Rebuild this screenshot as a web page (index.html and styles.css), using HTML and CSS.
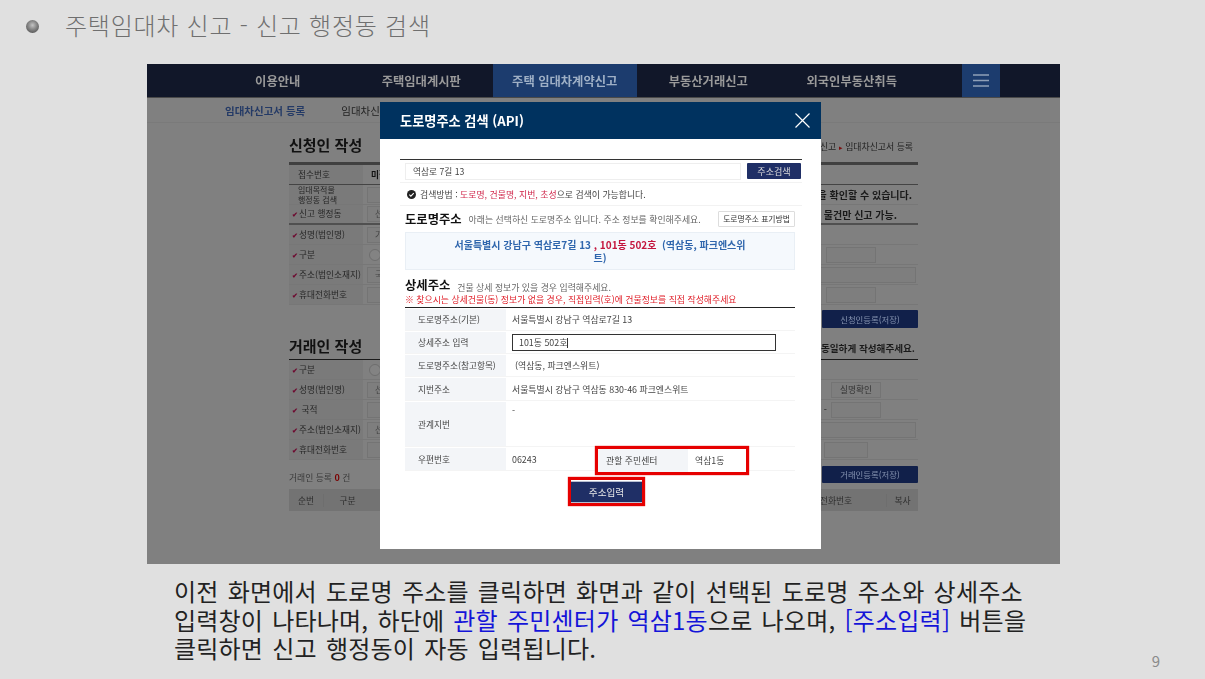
FILE: index.html
```html
<!DOCTYPE html>
<html lang="ko">
<head>
<meta charset="utf-8">
<title>주택임대차 신고 - 신고 행정동 검색</title>
<link rel="stylesheet" href="styles.css">
</head>
<body>
<div class="slide">
  <header class="slide-head">
    <span class="bullet"></span>
    <h1 class="slide-title">주택임대차 신고 - 신고 행정동 검색</h1>
  </header>

  <section class="shot">
    <nav class="gnb">
      <a class="gnb-item">이용안내</a>
      <a class="gnb-item">주택임대계시판</a>
      <a class="gnb-item active">주택 임대차계약신고</a>
      <a class="gnb-item">부동산거래신고</a>
      <a class="gnb-item">외국인부동산취득</a>
      <a class="gnb-menu"><svg width="16" height="13" viewBox="0 0 16 13"><path d="M0 1h16M0 6.5h16M0 12h16" stroke="#8fa0b8" stroke-width="1.5" fill="none"/></svg></a>
    </nav>
    <div class="subnav"><b>임대차신고서 등록</b><span>임대차신고서 조회</span></div>

    <div class="form">
      <div class="form-head">
        <h2>신청인 작성</h2>
        <span class="crumb">주택임대차 신고 <i>▸</i> 임대차신고서 등록</span>
      </div>
      <div class="rows thick">
        <div class="row line"><span class="lb plain">접수번호</span><span class="val">미접수</span></div>
        <div class="row"><span class="lb plain two">임대목적물<br>행정동 검색</span><span class="fld w100"></span><span class="note">을 확인할 수 있습니다.</span></div>
        <div class="row line2"><span class="lb req">신고 행정동</span><span class="fld w100">선택</span><span class="note n2">물건만 신고 가능.</span></div>
        <div class="row"><span class="lb req">성명(법인명)</span><span class="fld w100">가</span></div>
        <div class="row"><span class="lb req">구분</span><span class="radio"></span><span class="fld w50 ra"></span></div>
        <div class="row"><span class="lb req">주소(법인소재지)</span><span class="fld w100">국</span><span class="fld w90 ra2"></span></div>
        <div class="row"><span class="lb req">휴대전화번호</span><span class="fld w100"></span><span class="fld w50 ra"></span></div>
      </div>
      <div class="action"><span class="btn-dark">신청인등록(저장)</span></div>

      <div class="form-head second">
        <h2>거래인 작성</h2>
        <span class="crumb strong">동일하게 작성해주세요.</span>
      </div>
      <div class="rows thin">
        <div class="row"><span class="lb req">구분</span><span class="radio"></span></div>
        <div class="row"><span class="lb req">성명(법인명)</span><span class="fld w100">선</span><span class="fld w50 rb center">실명확인</span></div>
        <div class="row"><span class="lb req">&nbsp;국적</span><span class="fld w100"></span><span class="dash">-</span><span class="fld w50 rc"></span></div>
        <div class="row"><span class="lb req">주소(법인소재지)</span><span class="fld w100">선</span><span class="fld w90 ra2"></span></div>
        <div class="row"><span class="lb req">휴대전화번호</span><span class="fld w100"></span><span class="fld w44 rd"></span></div>
      </div>
      <div class="count-row">
        <span class="count">거래인 등록 <b>0</b> 건</span>
        <span class="btn-dark small">거래인등록(저장)</span>
      </div>
      <div class="thead">
        <span class="c1">순번</span><span class="c2">구분</span>
        <span class="c3">전화번호</span><span class="c4">복사</span>
      </div>
    </div>

    <div class="modal">
      <div class="modal-head">
        <strong>도로명주소 검색 (API)</strong>
        <svg width="15" height="15" viewBox="0 0 15 15"><path d="M.5.5l14 14M14.5.5l-14 14" stroke="#fff" stroke-width="1.2" fill="none"/></svg>
      </div>
      <div class="modal-body">
        <div class="search">
          <span class="search-input">역삼로 7길 13</span>
          <span class="search-btn">주소검색</span>
        </div>
        <div class="method">
          <svg width="9" height="9" viewBox="0 0 10 10"><circle cx="5" cy="5" r="5" fill="#222"/><path d="M2.6 5.1l1.7 1.7 3.2-3.3" stroke="#fff" stroke-width="1.2" fill="none"/></svg>
          <p>검색방법 : <em>도로명, 건물명, 지번, 초성</em>으로 검색이 가능합니다.</p>
        </div>
        <div class="inner">
          <div class="sec-head">
            <h3>도로명주소</h3><span class="hint">아래는 선택하신 도로명주소 입니다. 주소 정보를 확인해주세요.</span>
            <span class="rule-btn">도로명주소 표기방법</span>
          </div>
          <div class="picked">서울특별시 강남구 역삼로7길 13 <em>, 101동 502호</em> &nbsp;(역삼동, 파크엔스위<br>트)</div>
          <div class="sec-head detail">
            <h3>상세주소</h3><span class="hint">건물 상세 정보가 있을 경우 입력해주세요.</span>
          </div>
          <p class="warn">※ 찾으시는 상세건물(동) 정보가 없을 경우, 직접입력(호)에 건물정보를 직접 작성해주세요</p>
          <div class="tbl">
            <div class="tr"><span class="th">도로명주소(기본)</span><span class="td">서울특별시 강남구 역삼로7길 13</span></div>
            <div class="tr"><span class="th">상세주소 입력</span><span class="td"><span class="detail-input">101동 502호<i class="caret"></i></span></span></div>
            <div class="tr"><span class="th">도로명주소(참고항목)</span><span class="td ref">(역삼동, 파크엔스위트)</span></div>
            <div class="tr tall24"><span class="th">지번주소</span><span class="td">서울특별시 강남구 역삼동 830-46 파크엔스위트</span></div>
            <div class="tr tall"><span class="th">관계지번</span><span class="td top">-</span></div>
            <div class="tr tall24"><span class="th">우편번호</span><span class="td zip">06243</span>
              <span class="redbox"><span class="rb-label">관할 주민센터</span><span class="rb-val">역삼1동</span></span>
            </div>
          </div>
          <div class="submit"><span class="submit-frame"><span class="submit-btn">주소입력</span></span></div>
        </div>
      </div>
    </div>
  </section>

  <footer class="caption">
    <p class="caption-text">이전 화면에서 도로명 주소를 클릭하면 화면과 같이 선택된 도로명 주소와 상세주소<br>입력창이 나타나며, 하단에 <span class="blue">관할 주민센터가 역삼1동</span>으로 나오며, <span class="blue">[주소입력]</span> 버튼을<br>클릭하면 신고 행정동이 자동 입력됩니다.</p>
    <span class="page-no">9</span>
  </footer>
</div>
</body>
</html>
```

FILE: styles.css
```css
* { box-sizing: border-box; }
html, body { margin: 0; padding: 0; }
body {
  width: 1205px; height: 679px; overflow: hidden;
  background: #e0e0e0;
  font-family: "Noto Sans CJK KR", "Noto Sans", sans-serif;
  color: #222;
}
p, h1, h2, h3 { margin: 0; font-weight: inherit; }
em, i { font-style: normal; }

.slide { width: 1205px; height: 679px; display: flex; flex-direction: column; }

/* slide header */
.slide-head { height: 64px; display: flex; align-items: flex-start; padding: 7px 0 0 26px; }
.bullet {
  width: 13px; height: 13px; margin-top: 13px; border-radius: 50%;
  background: radial-gradient(circle at 50% 40%, #c4c4c4 0, #8a8a8a 40%, #3f3f3f 100%);
}
.slide-title {
  margin-left: 26px; font-size: 24px; line-height: 36px; font-weight: 300;
  color: #6f6f6f; letter-spacing: .75px; white-space: nowrap;
}

/* dimmed screenshot */
.shot {
  position: relative; width: 913px; height: 500px; margin-left: 147px;
  background: #808080; overflow: hidden; filter: blur(.3px);
}
.gnb { height: 34px; background: #111729; display: flex; padding-left: 59px; border-bottom: 1px solid #4a4a4a; }
.gnb-item {
  width: 143.5px; display: flex; align-items: center; justify-content: center;
  font-size: 12.3px; font-weight: 700; color: #9a9a9a; white-space: nowrap;
}
.gnb-item.active { background: #1c3c6e; color: #9fb0c6; }
.gnb-menu { width: 38px; margin-left: 38px; background: #1c3c6e; display: flex; align-items: center; justify-content: center; }

.subnav {
  height: 25px; border-bottom: 1px solid #7a7a7a; padding: 1px 0 0 78px;
  display: flex; align-items: center; gap: 36px; font-size: 10.5px; color: #1f1f1f; white-space: nowrap;
}
.subnav b { color: #243a66; font-weight: 700; }

/* background form */
.form { width: 629px; margin-left: 142px; }
.form-head { height: 40px; display: flex; align-items: flex-end; justify-content: space-between; padding-bottom: 8px; }
.form-head h2 { font-size: 15px; line-height: 20px; font-weight: 700; color: #111; }
.crumb { font-size: 8.9px; line-height: 16px; color: #222; padding-right: 5px; white-space: nowrap; }
.crumb i { color: #7a1010; font-size: 7px; }
.crumb.strong { font-size: 9.6px; font-weight: 700; color: #1a1a1a; padding-right: 3px; }
.form-head.second { height: 31px; padding-bottom: 3px; border-bottom: 1px solid #1a1a1a; }
.rows.thick { border-top: 3px solid #404040; margin-top: -1px; }
.row { height: 20px; display: flex; align-items: center; border-bottom: 1px solid #777; }
.row.line { border-bottom: 1px solid #444; }
.row.line2 { border-bottom: 2px solid #505050; }
.lb {
  width: 74px; height: 100%; flex: none; background: #7a7a7a; display: flex; align-items: center;
  font-size: 8.7px; line-height: 10px; color: #262626; padding-left: 3px; white-space: nowrap;
}
.lb.plain { padding-left: 9px; }
.lb.two { font-size: 8px; line-height: 10px; }
.lb.req::before { content: "✔"; color: #6e0a30; font-size: 7px; font-weight: 700; margin-right: 1px; }
.val { margin-left: 8px; font-size: 8.7px; font-weight: 700; color: #111; }
.fld {
  height: 16px; flex: none; margin-left: 4px; border: 1px solid #747474; background: #7e7e7e;
  font-size: 8.7px; line-height: 14px; color: #444; padding-left: 7px; white-space: nowrap;
}
.w100 { width: 60px; }
.w50 { width: 50px; }
.w44 { width: 44px; }
.w90 { width: 100px; }
.center { padding: 0; text-align: center; color: #333; }
.ra { margin-left: auto; margin-right: 42px; }
.ra2 { margin-left: auto; margin-right: 2px; }
.rb, .rc { margin-left: auto; margin-right: 37px; }
.rd { margin-left: auto; margin-right: 50px; }
.dash { margin-left: auto; margin-right: 4px; font-size: 9px; color: #222; }
.dash + .rc { margin-left: 0; }
.radio { width: 12px; height: 12px; margin-left: 6px; border: 1px solid #6e6e6e; border-radius: 50%; background: #838383; }
.note { margin-left: auto; padding-right: 6px; font-size: 10px; font-weight: 700; color: #1a1a1a; white-space: nowrap; }
.note.n2 { padding-right: 21px; }
.action { height: 24px; display: flex; justify-content: flex-end; align-items: flex-start; padding-top: 5px; }
.btn-dark {
  width: 96px; height: 18px; background: #11204a; color: #8593b0; border-radius: 1px;
  font-size: 8.4px; line-height: 18px; text-align: center; white-space: nowrap;
}
.btn-dark.small { height: 17px; line-height: 17px; margin-top: 6px; }
.count-row { height: 29px; display: flex; justify-content: space-between; align-items: flex-start; }
.count { font-size: 8.8px; line-height: 14px; color: #3a3a3a; margin-top: 11px; white-space: nowrap; }
.count b { color: #7a0000; font-size: 9px; }
.thead { height: 22px; background: #737373; display: flex; align-items: center; font-size: 8.8px; color: #2e2e2e; }
.thead span { text-align: center; }
.c1 { width: 34px; }
.c2 { width: 48px; border-left: 1px solid #6e6e6e; }
.c3 { width: 80px; margin-left: auto; padding-right: 20px; }
.c4 { width: 32px; border-left: 1px solid #6e6e6e; }

/* modal */
.modal {
  position: absolute; left: 233px; top: 38px; width: 441px; height: 447px;
  background: #fff; display: flex; flex-direction: column;
}
.modal-head {
  height: 37px; flex: none; background: #00325f; color: #fff;
  display: flex; align-items: center; justify-content: space-between; padding: 0 11px 0 20px;
}
.modal-head strong { font-size: 13.2px; font-weight: 700; white-space: nowrap; }
.modal-body { padding: 20px 19px 0 20px; }
.search {
  border-top: 1px solid #333; height: 24px; padding: 3px 1px 0 5px;
  display: flex; justify-content: space-between; align-items: flex-start; border-bottom: 1px solid #f2f2f2;
}
.search-input {
  width: 336px; height: 17px; border: 1px solid #eee; padding-left: 7px;
  font-size: 8.7px; line-height: 15px; color: #444; white-space: nowrap;
}
.search-btn {
  width: 54px; height: 16px; background: #1f2f66; color: #ddd; border-radius: 1px;
  font-size: 9.1px; line-height: 16px; text-align: center;
}
.method {
  height: 23px; padding-left: 7px; display: flex; align-items: center; gap: 4px;
  font-size: 8.9px; color: #444; border-bottom: 1px solid #f2f2f2; white-space: nowrap;
}
.method em { color: #d0284c; }
.inner { padding: 0 7px 0 5px; }
.sec-head { height: 26px; display: flex; align-items: center; white-space: nowrap; }
.sec-head h3 { font-size: 12.3px; font-weight: 700; color: #111; }
.hint { margin-left: 7px; font-size: 8.9px; color: #666; }
.rule-btn {
  margin-left: auto; width: 77px; height: 16px; border: 1px solid #ddd; border-radius: 1px;
  font-size: 7.8px; line-height: 14px; text-align: center; color: #333;
}
.picked {
  height: 38px; background: #f5f9fd; border: 1px solid #e9eff5; text-align: center; padding-top: 5px;
  font-size: 10px; line-height: 13px; font-weight: 700; color: #2f66ad; white-space: nowrap;
}
.picked em { color: #c4163e; }
.sec-head.detail { height: 22px; margin-top: 2px; align-items: flex-end; }
.warn { font-size: 8.9px; line-height: 12px; color: #e0202a; white-space: nowrap; }
.tbl { border-top: 1px solid #222; margin-top: 1px; font-size: 8.9px; color: #444; }
.tr { height: 23px; display: flex; align-items: center; padding-top: 1px; border-bottom: 1px solid #f4f4f4; white-space: nowrap; }
.tr.tall { height: 46px; }
.tr.tall24 { height: 24px; }
.th { width: 101px; height: 100%; flex: none; background: #f3f5f8; padding-left: 13px; display: flex; align-items: center; font-size: 8.7px; }
.td { margin-left: 6px; }
.td.ref { margin-left: 9px; }
.td.top { align-self: flex-start; margin-top: 2px; }
.td.zip { width: 56px; margin-left: 6px; }
.detail-input {
  display: flex; align-items: center; width: 264px; height: 17px; border: 1px solid #333; padding-left: 6px;
}
.caret { width: 1px; height: 10px; background: #333; }
.redbox {
  display: flex; align-items: center; width: 154px; height: 29px; margin: 2px 0 0 27px; flex: none;
  border: 3px solid #e60000; box-shadow: 0 0 1px #e60000; background: #fff;
}
.rb-label { width: 90px; height: 100%; background: #f3f5f8; padding-left: 8px; line-height: 23px; }
.rb-val { margin-left: 7px; }
.submit { display: flex; justify-content: center; padding: 6px 0 0 13px; }
.submit-frame { display: block; border: 3px solid #e60000; padding-top: 1px; box-shadow: 0 0 1px #e60000; }
.submit-btn {
  display: block; width: 71px; height: 22px; background: #1f2f66; color: #e8e8e8;
  border-top: 1px solid #b8bfd2; border-bottom: 1px solid #b8bfd2;
  font-size: 9.6px; line-height: 20px; text-align: center;
}

/* caption */
.caption { flex: 1; display: flex; justify-content: space-between; padding: 13px 45px 0 174px; }
.caption-text { font-size: 24px; line-height: 28.5px; color: #222; letter-spacing: .2px; word-spacing: 2.2px; white-space: nowrap; }
.blue { color: #1414d8; }
.page-no { align-self: flex-end; margin-bottom: 8px; font-size: 15px; color: #8a8a8a; }
```
